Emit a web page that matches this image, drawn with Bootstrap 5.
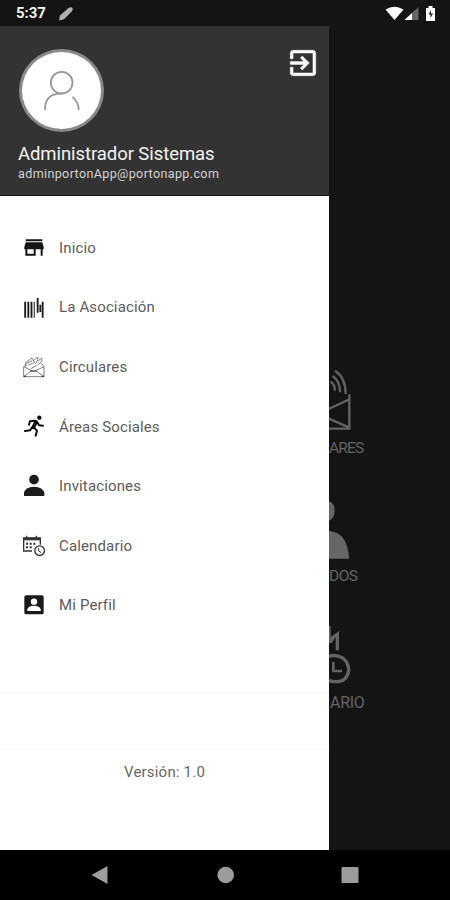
<!DOCTYPE html>
<html lang="es">
<head>
<meta charset="utf-8">
<meta name="viewport" content="width=device-width, initial-scale=1">
<title>Menú</title>
<link href="https://cdn.jsdelivr.net/npm/bootstrap@5.3.0/dist/css/bootstrap.min.css" rel="stylesheet">
<style>
body{font-family:Roboto,"Liberation Sans",sans-serif;background:#141414}
.screen{width:450px;height:900px;background:#141414}
.status{height:26px;padding:1px 14px 0 16px;background:#141414;color:#f2f2f2}
.clock{font-size:15px;font-weight:700;line-height:25px;letter-spacing:-.1px}
.drawer{width:329px;background:#fff}
.head{height:170px;background:#333;padding:23px 9px 0 18px;border-bottom:1px solid #1c1c1c}
.avatar{width:85px;height:83px;border:3px solid #8a8a8a;margin-left:1px}
.logout{margin-top:-3px}
.fullname{font-size:18.5px;line-height:22px;color:#f4f4f4;margin-top:11px;letter-spacing:-.07px}
.mail{font-size:12.5px;line-height:17px;color:#d4d4d4;letter-spacing:.39px}
.entries{padding:22.4px 0 0 22px}
.entry{height:59.55px;gap:13px;color:#5c5c5c;font-size:15px;letter-spacing:.14px}
.foot-a{height:57.5px;margin-top:57px;border-top:1px solid #f3f3f3;border-bottom:1px solid #f9f9f9}
.version{font-size:15px;color:#686868;padding-top:11px;letter-spacing:.2px}
.behind{color:#646464;padding-top:340px}
.tile{height:127.5px;font-size:16px;line-height:20px}
.tile svg{display:block;margin-bottom:7px}
.tile-label{display:block;font-size:15.5px;letter-spacing:-.8px}
.tile-label.spaced{letter-spacing:-.5px}
.tile-label.wide{margin-left:1px;font-size:16px;letter-spacing:-.3px}
.softkeys{height:50.5px;background:#000}
</style>
<script src="https://cdn.jsdelivr.net/npm/bootstrap@5.3.0/dist/js/bootstrap.bundle.min.js"></script>
</head>
<body>
<div class="screen d-flex flex-column overflow-hidden">
  <header class="status d-flex align-items-center flex-shrink-0">
    <span class="clock">5:37</span>
    <svg class="ms-2" width="22" height="18" viewBox="0 0 22 18"><path d="M5 15.500l1-5 8.500-7.500q2.500-1.500 4 0 .8 1.500-.8 3.500L10 14.300z" fill="#b0b0b0"/></svg>
    <svg class="ms-auto" width="52" height="20" viewBox="0 0 52 20"><path d="M1.500 5.500Q10.500-.2 19.500 5.500L10.500 16z" fill="#fff"/><path d="M20.500 16L34.500 3v13z" fill="#666"/><path d="M20.500 16l7.500-7v7z" fill="#fff"/><path d="M42 4h2.500V2h4v2H51v13h-9z" fill="#fff"/><path d="M47 6l-2.500 4.500h2v3.500l2.500-4.500h-2z" fill="#222"/></svg>
  </header>
  <main class="d-flex flex-grow-1 overflow-hidden">
    <aside class="drawer flex-shrink-0">
      <div class="head">
        <div class="d-flex justify-content-between align-items-start">
          <div class="avatar rounded-circle bg-white d-flex align-items-center justify-content-center">
            <svg width="40" height="44" viewBox="126 84 120 132" fill="none" stroke="#999" stroke-width="5.500" stroke-linecap="round"><circle cx="185" cy="125" r="32.500"/><path d="M135 205q0-47 48-47M219 169q16 14 17 36"/></svg>
          </div>
          <svg width="34" height="34" viewBox="0 0 24 24" fill="#fff" stroke="#fff" stroke-width=".3" class="logout"><path d="M10.090 15.590L11.500 17l5-5-5-5-1.410 1.410L12.670 11H3v2h9.670zM19 3H5c-1.110 0-2 .9-2 2v4h2V5h14v14H5v-4H3v4c0 1.100.89 2 2 2h14c1.100 0 2-.9 2-2V5c0-1.100-.9-2-2-2z"/></svg>
        </div>
        <div class="fullname">Administrador Sistemas</div>
        <div class="mail">adminportonApp@portonapp.com</div>
      </div>
      <nav class="entries">
        <div class="entry d-flex align-items-center">
          <svg width="24" height="24" viewBox="36 18 72 72" fill="#151515"><path d="M47 28h50v6H47zM47 37h50l4 14v7h-3v19h-6V58H77v19H46V58h-3v-7zM52 58v13h19V58z" fill-rule="evenodd"/></svg>
          <span>Inicio</span>
        </div>
        <div class="entry d-flex align-items-center">
          <svg width="24" height="24" viewBox="36 196 72 72"><path d="M45.500 213v48M55 213v48M64.500 213v48M98 213v48" stroke="#1b1b1b" stroke-width="5.500"/><path d="M73 213v48" stroke="#555" stroke-width="4"/><path d="M83 202v44M91 222v22" stroke="#1b1b1b" stroke-width="5.500"/></svg>
          <span>La Asociación</span>
        </div>
        <div class="entry d-flex align-items-center">
          <svg width="24" height="24" viewBox="36 30 72 72" fill="none" stroke="#777" stroke-width="2.800"><path d="M41 65l30 15 31-15v30H41zM41 95l24-18M102 95L78 77M41 65l10-10M93 54l9 11M48 67l-2-13 20-15 10 17M51 55l16-8M55 61l16-8M72 46q7-12 13-8l-6 16M84 48l11-9 1 9-13 12M62 71l18-9"/><path d="M41 94h7M95 94h8M60 78h20" stroke="#333" stroke-width="3"/></svg>
          <span>Circulares</span>
        </div>
        <div class="entry d-flex align-items-center">
          <svg width="24" height="24" viewBox="36 209 72 72" fill="none" stroke="#0d0d0d" stroke-width="6" stroke-linecap="round" stroke-linejoin="round"><circle cx="88" cy="217" r="6.500" fill="#0d0d0d" stroke="none"/><path d="M57 238l3-10 14-2 8 5 5 9 12 1M68 244l-8 11-15 2M72 247l9 9-4 15"/><path d="M78 230l-8 16" stroke-width="11"/></svg>
          <span>Áreas Sociales</span>
        </div>
        <div class="entry d-flex align-items-center">
          <svg width="24" height="24" viewBox="36 28 72 72" fill="#1c1c1c"><circle cx="72" cy="45" r="14.500"/><path d="M42 94V86q3-20 30-20t31 20v8z"/></svg>
          <span>Invitaciones</span>
        </div>
        <div class="entry d-flex align-items-center">
          <svg width="24" height="24" viewBox="36 207 72 72" fill="none" stroke="#333" stroke-width="4"><path d="M66 258H41v-39h50v20M50 212v11M79 212v11"/><path d="M41 222h50" stroke-width="8"/><path d="M48 236h6M59 236h6M70 236h6M48 247h6M59 247h6" stroke-width="6"/><circle cx="89" cy="257" r="14.500"/><path d="M86 249v9l8 5" stroke-width="3"/></svg>
          <span>Calendario</span>
        </div>
        <div class="entry d-flex align-items-center">
          <svg width="24" height="24" viewBox="36 385 72 72"><rect x="43" y="392" width="58" height="57" rx="5" fill="#1a1a1a"/><circle cx="72" cy="411" r="9.500" fill="#fff"/><path d="M52 439v-5q3-11 20-11t20 11v5z" fill="#fff"/></svg>
          <span>Mi Perfil</span>
        </div>
      </nav>
      <div class="foot-a"></div>
      <div class="version text-center">Versión: 1.0</div>
    </aside>
    <section class="behind flex-grow-1 overflow-hidden">
      <div class="tile">
        <svg width="36" height="65" viewBox="57 18 108 195" fill="none" stroke="#626262" stroke-width="7"><path d="M57 146l61-28V206H57M57 176l61 27M118 103v20M75 32q32 20 32 70M68 48q23 17 22 49M62 65q14 10 12 27"/></svg>
        <span class="tile-label">ARES</span>
      </div>
      <div class="tile">
        <svg width="36" height="65" viewBox="57 12 108 195" fill="#666"><path d="M57 34q17 6 17 28T57 92zM57 122q57 6 60 84H57z"/></svg>
        <span class="tile-label spaced">DOS</span>
      </div>
      <div class="tile">
        <svg width="36" height="65" viewBox="57 35 108 195" fill="none" stroke="#646464" stroke-width="10"><path d="M57 50v48M57 97q9 1 11-12l14-10v48"/><path d="M57 141q20-7 41 5 19 15 18 38-5 33-39 33-11 0-20-4"/><path d="M70 158v27h26" stroke-width="8"/></svg>
        <span class="tile-label wide">ARIO</span>
      </div>
    </section>
  </main>
  <footer class="softkeys flex-shrink-0 d-flex align-items-center">
    <svg width="450" height="50" viewBox="0 0 450 50" fill="#9c9c9c"><path d="M91.500 25L107.500 16v18z"/><circle cx="225.700" cy="25" r="8.300"/><rect x="341.500" y="17" width="17" height="16" rx="1"/></svg>
  </footer>
</div>
</body>
</html>
